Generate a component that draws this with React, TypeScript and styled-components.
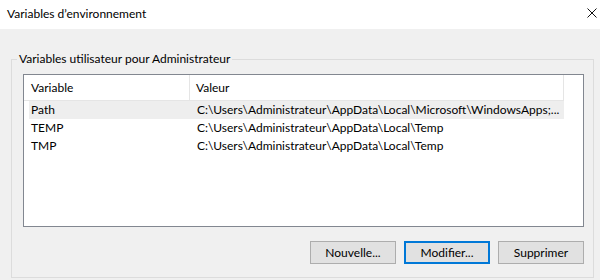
import React from "react";
import styled, { createGlobalStyle } from "styled-components";

const GlobalStyle = createGlobalStyle`
  html, body {
    margin: 0;
    padding: 0;
    background: #f0f0f0;
  }
  body {
    font-family: Lato, "Noto Sans", sans-serif;
    font-size: 12px;
    color: #000;
  }
`;

interface IVar {
  name: string;
  value: string;
}

const vars: IVar[] = [
  {
    name: "Path",
    value: "C:\\Users\\Administrateur\\AppData\\Local\\Microsoft\\WindowsApps;...",
  },
  { name: "TEMP", value: "C:\\Users\\Administrateur\\AppData\\Local\\Temp" },
  { name: "TMP", value: "C:\\Users\\Administrateur\\AppData\\Local\\Temp" },
];

const App: React.FC = () => {
  return (
    <>
      <GlobalStyle />
      <Dialog>
        <TitleBar>
          <span>Variables d’environnement</span>
          <CloseIcon viewBox="0 0 10 10">
            <path d="M0.5 0.5 L9.5 9.5 M9.5 0.5 L0.5 9.5" />
          </CloseIcon>
        </TitleBar>

        <Group>
          <Legend>Variables utilisateur pour Administrateur</Legend>

          <ListBox>
            <Header>
              <HeaderCell>Variable</HeaderCell>
              <HeaderCell>Valeur</HeaderCell>
            </Header>
            {vars.map((v, i) => (
              <Row key={v.name} selected={i === 0}>
                <Cell>{v.name}</Cell>
                <Cell $value>{v.value}</Cell>
              </Row>
            ))}
          </ListBox>

          <Buttons>
            <Button>Nouvelle...</Button>
            <Button $default>Modifier...</Button>
            <Button>Supprimer</Button>
          </Buttons>
        </Group>
      </Dialog>
    </>
  );
};

const Dialog = styled.div`
  width: 600px;
  height: 280px;
  overflow: hidden;
  display: flex;
  flex-direction: column;
  background: #f0f0f0;
`;

const TitleBar = styled.div`
  height: 29px;
  flex-shrink: 0;
  background: #fff;
  display: flex;
  align-items: center;
  justify-content: space-between;
  padding: 0 3px 0 7px;
  font-size: 12px;
  line-height: 16px;
  & > span {
    margin-top: -1px;
  }
`;

const CloseIcon = styled.svg`
  width: 10px;
  height: 10px;
  margin-top: -3px;
  fill: none;
  stroke: #111;
  stroke-width: 1;
`;

const Group = styled.fieldset`
  margin: 22px 6px 2px 11px;
  padding: 7px 9px 13px 11px;
  border: 1px solid #dcdcdc;
  flex: 1;
  min-height: 0;
  display: flex;
  flex-direction: column;
`;

const Legend = styled.legend`
  padding: 0 2px;
  margin-left: -6px;
  line-height: 16px;
  font-size: 12px;
`;

const ListBox = styled.div`
  height: 151px;
  background: #fff;
  border: 1px solid #828790;
  overflow: hidden;
`;

const Header = styled.div`
  display: grid;
  grid-template-columns: 166px 374px;
  height: 25px;
  border-bottom: 1px solid #e5e5e5;
  width: 540px;
`;

const HeaderCell = styled.div`
  display: flex;
  align-items: center;
  padding-left: 6px;
  border-right: 1px solid #e5e5e5;
  &:first-child {
    padding-left: 7px;
  }
`;

const Row = styled.div<{ selected?: boolean }>`
  display: grid;
  grid-template-columns: 161px 374px;
  height: 18px;
  margin-left: 5px;
  width: 535px;
  align-items: center;
  background: ${({ selected }) => (selected ? "#eeeeee" : "transparent")};
`;

const Cell = styled.div<{ $value?: boolean }>`
  padding-left: ${({ $value }) => ($value ? "7px" : "2px")};
  white-space: nowrap;
  overflow: hidden;
  text-overflow: clip;
  line-height: 18px;
`;

const Buttons = styled.div`
  display: flex;
  justify-content: flex-end;
  gap: 8px;
  margin-top: 14px;
`;

const Button = styled.button<{ $default?: boolean }>`
  width: 86px;
  height: 23px;
  box-sizing: border-box;
  background: #e1e1e1;
  border: ${({ $default }) =>
    $default ? "2px solid #0078d7" : "1px solid #adadad"};
  font-family: Lato, "Noto Sans", sans-serif;
  font-size: 12px;
  color: #000;
  padding: 0;
`;

export default App;
